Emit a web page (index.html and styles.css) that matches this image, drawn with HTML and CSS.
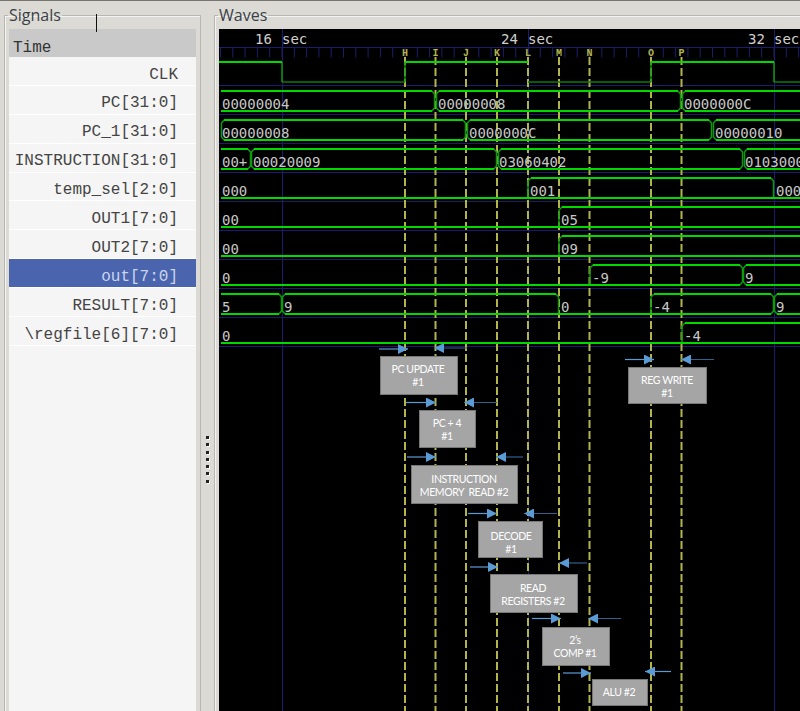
FILE: index.html
```html
<!DOCTYPE html>
<html lang="en">
<head>
<meta charset="utf-8">
<title>Waves</title>
<link rel="stylesheet" href="styles.css">
</head>
<body>
<div class="app">
  <fieldset class="panel signals">
    <legend>Signals</legend>
    <div class="list">
      <div class="head">Time</div>
      <div class="row">CLK</div>
      <div class="row">PC[31:0]</div>
      <div class="row">PC_1[31:0]</div>
      <div class="row">INSTRUCTION[31:0]</div>
      <div class="row">temp_sel[2:0]</div>
      <div class="row">OUT1[7:0]</div>
      <div class="row">OUT2[7:0]</div>
      <div class="row selected">out[7:0]</div>
      <div class="row">RESULT[7:0]</div>
      <div class="row">\regfile[6][7:0]</div>
    </div>
  </fieldset>
  <div class="splitter"><i></i><i></i><i></i><i></i><i></i><i></i><i></i></div>
  <fieldset class="panel waves">
    <legend>Waves</legend>
    <svg class="canvas" viewBox="219 29 581 682" width="581" height="682" xmlns="http://www.w3.org/2000/svg">
      <defs>
        <marker id="head" viewBox="0 0 10 10" refX="10" refY="5" markerWidth="10" markerHeight="10" markerUnits="userSpaceOnUse" orient="auto">
          <path class="head" d="M0 0L10 5L0 10z"/>
        </marker>
      </defs>

      <path class="grid" d="M219 47.5H800M219 85.5H800M219 114.5H800M219 143.5H800M219 172.5H800M219 201.5H800M219 230.5H800M219 259.5H800M219 288.5H800M219 317.5H800M219 346.5H800M282.5 29V711M528.5 29V711M774.5 29V711"/>
      <path class="ticks" d="M220 52.5H800"/>

      <g class="labels">
        <text x="255" y="44">16</text><text x="282" y="44">sec</text>
        <text x="501" y="44">24</text><text x="528" y="44">sec</text>
        <text x="748" y="44">32</text><text x="774" y="44">sec</text>
      </g>

      <path class="cursor" d="M405 57V711M435.500 57V711M466 57V711M497 57V711M528 57V711M559 57V711M589.500 57V711M651 57V711M681.500 57V711"/>
      <g class="letters">
        <text x="405" y="56">H</text><text x="435.500" y="56">I</text><text x="466" y="56">J</text>
        <text x="497" y="56">K</text><text x="528" y="56">L</text><text x="559" y="56">M</text>
        <text x="589.500" y="56">N</text><text x="651" y="56">O</text><text x="681.500" y="56">P</text>
      </g>

      <path class="low" d="M282 82H405M528 82H651M774 82H800"/>
      <path class="edge" d="M282 62V82M405 82V62M651 82V62M774 62V82"/>
      <path class="wave" d="M219 62H282M405 62H528M651 62H774"/>

      <path class="edge" d="M432 91L434.500 94V108L432 111M439 91L436.500 94V108L439 111M678 91L680.500 94V108L678 111M685 91L682.500 94V108L685 111"/>
      <path class="wave" d="M221 91H432M221 111H432M439 91H678M439 111H678M685 91H800M685 111H800"/>

      <path class="edge" d="M224 120L221.500 123V137L224 140M463 120L465.500 123V137L463 140M470 120L467.500 123V137L470 140M709 120L711.500 123V137L709 140M716 120L713.500 123V137L716 140"/>
      <path class="wave" d="M224 120H463M224 140H463M470 120H709M470 140H709M716 120H800M716 140H800"/>

      <path class="edge" d="M248 149L250.500 152V166L248 169M254 149L251.500 152V166L254 169M494 149L496.500 152V166L494 169M501 149L498.500 152V166L501 169M740 149L742.500 152V166L740 169M747 149L744.500 152V166L747 169"/>
      <path class="wave" d="M221 149H248M221 169H248M254 149H494M254 169H494M501 149H740M501 169H740M747 149H800M747 169H800"/>

      <path class="edge" d="M528 198V181L531 178M771 178L773.500 181V198"/>
      <path class="wave" d="M221 198H800M531 178H771"/>

      <path class="edge" d="M559 227V210L562 207"/>
      <path class="wave" d="M221 227H800M562 207H800"/>

      <path class="edge" d="M559 256V239L562 236"/>
      <path class="wave" d="M221 256H800M562 236H800"/>

      <path class="edge" d="M590 285V268L593 265M740 265L742.500 268V282L740 285M746 265L743.500 268V282L746 285"/>
      <path class="wave" d="M221 285H740M746 285H800M593 265H740M746 265H800"/>

      <path class="edge" d="M279 294L281.500 297V311L279 314M285 294L282.500 297V311L285 314M556 294L558.500 297V314M651 314V297L654 294M771 294L773.500 297V311L771 314M777 294L774.500 297V311L777 314"/>
      <path class="wave" d="M221 294H279M221 314H279M285 294H556M285 314H771M654 294H771M777 294H800M777 314H800"/>

      <path class="edge" d="M682 343V326L685 323"/>
      <path class="wave" d="M221 343H800M685 323H800"/>

      <g class="values">
        <text x="222" y="109">00000004</text><text x="438" y="109">00000008</text><text x="684" y="109">0000000C</text>
        <text x="222" y="138">00000008</text><text x="469" y="138">0000000C</text><text x="715" y="138">00000010</text>
        <text x="222" y="167">00+</text><text x="253" y="167">00020009</text><text x="499" y="167">03060402</text><text x="745" y="167">01030000</text>
        <text x="222" y="196">000</text><text x="530" y="196">001</text><text x="776" y="196">000</text>
        <text x="222" y="225">00</text><text x="561" y="225">05</text>
        <text x="222" y="254">00</text><text x="561" y="254">09</text>
        <text x="222" y="283">0</text><text x="592" y="283">-9</text><text x="745" y="283">9</text>
        <text x="222" y="312">5</text><text x="284" y="312">9</text><text x="561" y="312">0</text><text x="653" y="312">-4</text><text x="776" y="312">9</text>
        <text x="222" y="341">0</text><text x="684" y="341">-4</text>
      </g>

      <g class="boxes">
        <rect x="380.500" y="356.500" width="77" height="38"/>
        <rect x="628.500" y="367.500" width="78" height="36"/>
        <rect x="419.500" y="410.500" width="56" height="37"/>
        <rect x="411.500" y="465.500" width="106" height="38"/>
        <rect x="478.500" y="521.500" width="64" height="36"/>
        <rect x="490.500" y="574.500" width="87" height="38"/>
        <rect x="542.500" y="627.500" width="67" height="38"/>
        <rect x="592.500" y="679.500" width="55" height="26"/>
      </g>
      <g class="captions">
        <text x="418" y="373">PC UPDATE</text><text x="418" y="386">#1</text>
        <text x="667" y="384">REG WRITE</text><text x="667" y="397">#1</text>
        <text x="447" y="427">PC + 4</text><text x="447" y="440">#1</text>
        <text x="464" y="483">INSTRUCTION</text><text x="464" y="496">MEMORY  READ #2</text>
        <text x="511" y="539.500">DECODE</text><text x="511" y="552.500">#1</text>
        <text x="533" y="591.500">READ</text><text x="533" y="604.500">REGISTERS #2</text>
        <text x="575" y="644">2’s</text><text x="575" y="657">COMP #1</text>
        <text x="619" y="695.500">ALU #2</text>
      </g>

      <g class="arrows">
        <path d="M379 349H408"/><path class="back" d="M467 348H434"/>
        <path d="M625 359.500H654"/><path class="back" d="M714 359.500H681"/>
        <path d="M406 402.500H436"/><path class="back" d="M497 402.500H464"/>
        <path d="M407 457H436"/><path class="back" d="M523 457H496"/>
        <path d="M468 513.500H497"/><path class="back" d="M557 513.500H524"/>
        <path d="M470 567H498"/><path class="back" d="M587 563H559"/>
        <path d="M532 618.500H561"/><path class="back" d="M621 618.500H588"/>
        <path d="M563 673H591"/><path d="M671 671.500H645"/>
      </g>
    </svg>
  </fieldset>
</div>
<div class="caret"></div>
</body>
</html>
```
FILE: styles.css
```css
html, body {
  margin: 0;
  height: 711px;
  overflow: hidden;
  background: #dcdad5;
}

.app {
  display: flex;
  height: 711px;
  box-sizing: border-box;
  border-top: 1px solid #77756f;
  padding-left: 4px;
  overflow: hidden;
}

.panel {
  margin: 0;
  min-width: 0;
  box-sizing: border-box;
  height: 710px;
  margin-top: 6px;
  padding: 6px 4px 0;
  border: 1px solid #b9b7b1;
  border-bottom: 0;
  box-shadow: inset 1px 1px 0 #f4f3f1;
}

.panel legend {
  padding: 0 1px;
  margin-left: -1px;
  font: 16px/16px "Open Sans", sans-serif;
  color: #3a3f48;
}

.signals {
  flex: 0 0 197px;
}

.waves {
  flex: 0 0 640px;
}

.list {
  height: 682px;
  background: #f5f5f5;
  font: 16px "Liberation Mono", monospace;
  color: #444;
}

.head {
  height: 28px;
  box-sizing: border-box;
  padding: 3px 0 0 4px;
  line-height: 33px;
  background: #c9c9c9;
  color: #333;
}

.row {
  height: 28.9px;
  box-sizing: border-box;
  padding: 3.500px 18px 0 0;
  line-height: 29px;
  text-align: right;
  border-bottom: 1.5px solid #fff;
}

.selected {
  background: #4a64ad;
  color: #c9d5ee;
}

.splitter {
  flex: 0 0 13px;
  box-sizing: border-box;
  display: flex;
  flex-direction: column;
  align-items: center;
  gap: 4.300px;
  padding-top: 435px;
}

.splitter i {
  width: 3px;
  height: 3px;
  background: #222;
  box-shadow: 1px 1px 0 #fff;
}

.canvas {
  display: block;
  background: #000;
}

.grid {
  fill: none;
  stroke: #1c1c6e;
  stroke-width: 1;
}

.ticks {
  fill: none;
  stroke: #1c1c6e;
  stroke-width: 10;
  stroke-dasharray: 1 11.300;
}

.labels text {
  font: 14px "DejaVu Sans Mono", monospace;
  fill: #d0d0d0;
}

.cursor {
  fill: none;
  stroke: #b4b44c;
  stroke-width: 2;
  stroke-dasharray: 8 3;
}

.letters text {
  font: bold 10px "Liberation Mono", monospace;
  fill: #b4b44c;
  text-anchor: middle;
}

.wave {
  fill: none;
  stroke: #00d800;
  stroke-width: 2;
}

.edge {
  fill: none;
  stroke: #0a9a0a;
  stroke-width: 1.500;
}

.low {
  fill: none;
  stroke: #0b7a0b;
  stroke-width: 1.500;
}

.values text {
  font: 14px "DejaVu Sans Mono", monospace;
  fill: #c8c8c8;
}

.boxes rect {
  fill: #a5a5a5;
  stroke: #787878;
  stroke-width: 1;
}

.captions text {
  font: 10.500px "Lato", sans-serif;
  letter-spacing: -0.4px;
  fill: #fff;
  text-anchor: middle;
  white-space: pre;
}

.arrows path {
  fill: none;
  stroke: #5b9bd5;
  stroke-width: 1.200;
  marker-end: url(#head);
}

.arrows .back {
  stroke: #2f6291;
}

.head {
  fill: #5b9bd5;
  stroke: none;
}

.caret {
  position: absolute;
  left: 96px;
  top: 14px;
  width: 1px;
  height: 18px;
  background: #111;
}
```
